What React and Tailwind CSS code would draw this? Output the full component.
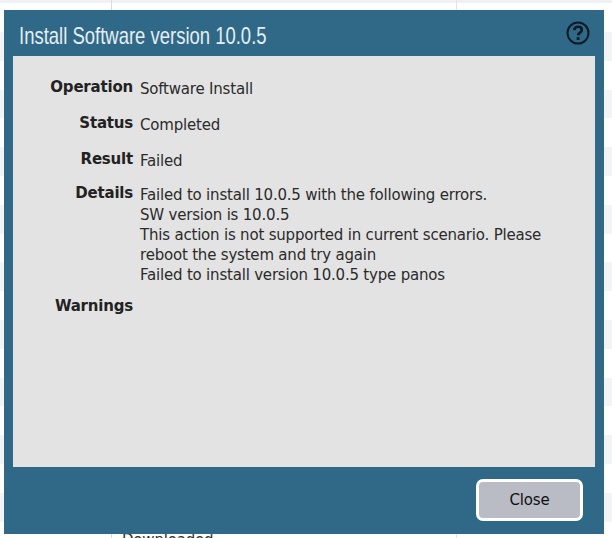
const rowTones = Array.from({ length: 19 }, (_, i) => i % 2 === 0);

function Field({ label, children, className = "" }) {
  return (
    <div className={`flex ${className}`}>
      <div className="w-[120px] shrink-0 text-right font-bold text-[15px] leading-5 tracking-[-0.2px] text-[#222] -translate-y-[2px]">
        {label}
      </div>
      <div className="ml-[7px] flex-1 text-[15px] leading-5 tracking-[-0.2px] text-[#2b2b2b]">
        {children}
      </div>
    </div>
  );
}

export default function App() {
  return (
    <div className="relative h-[538px] w-[612px] overflow-hidden bg-white font-['DejaVu_Sans',sans-serif]">
      {/* table behind the dialog */}
      <div className="h-[3px] bg-[#f0f1f4]" />
      <div className="h-[29px]" />
      {rowTones.map((gray, i) => (
        <div key={i} className={`h-[28.8px] ${gray ? "bg-[#f3f4f6]" : "bg-white"}`} />
      ))}
      <div className="absolute left-[111px] top-0 h-full w-px bg-[#d9d9d9]" />
      <div className="absolute left-[456px] top-0 h-full w-px bg-[#e4e4e4]" />
      <div className="absolute left-[122px] top-[530px] text-[15px] leading-5 tracking-[-0.2px] text-[#333]">
        Downloaded
      </div>

      {/* dialog */}
      <div className="absolute left-[4px] top-[10px] flex h-[524px] w-[600px] flex-col bg-[#2f6987]">
        <div className="flex h-[46px] items-center justify-between pl-[15px] pr-[14px]">
          <h1 className="mt-[5px] origin-left scale-x-[0.77] whitespace-nowrap font-['Liberation_Sans',sans-serif] text-[24px] font-normal leading-[50px] text-[#e6eef2]">
            Install Software version 10.0.5
          </h1>
          <svg width="24" height="24" viewBox="0 0 24 24" fill="none" stroke="#101a26" strokeWidth="2" className="-mt-[1px]">
            <circle cx="12" cy="12" r="10.5" />
            <path d="M8.2 9.2c.2-2.1 1.8-3.4 3.9-3.4 2.1 0 3.7 1.2 3.7 3.1 0 2.7-3.6 2.7-3.7 5.5" strokeWidth="2.6" />
            <path d="M12.1 16.2v2.8" strokeWidth="2.8" />
          </svg>
        </div>

        <div className="mx-[9px] h-[411px] bg-[#e3e3e3] pt-[23px]">
          <Field label="Operation">Software Install</Field>
          <Field label="Status" className="mt-4">Completed</Field>
          <Field label="Result" className="mt-4">Failed</Field>
          <Field label="Details" className="mt-[14px]">
            <div>Failed to install 10.0.5 with the following errors.</div>
            <div>SW version is 10.0.5</div>
            <div className="w-[420px]">This action is not supported in current scenario. Please reboot the system and try again</div>
            <div>Failed to install version 10.0.5 type panos</div>
          </Field>
          <Field label="Warnings" className="mt-[13px]" />
        </div>

        <div className="flex flex-1 items-start justify-end pr-[21px] pt-[12px]">
          <button
            type="button"
            className="h-[42px] w-[107px] rounded-[7px] border-[3px] border-white bg-[#b9bcc5] font-['DejaVu_Sans',sans-serif] text-[15px] tracking-[-0.2px] text-[#111]"
          >
            Close
          </button>
        </div>
      </div>
    </div>
  );
}
